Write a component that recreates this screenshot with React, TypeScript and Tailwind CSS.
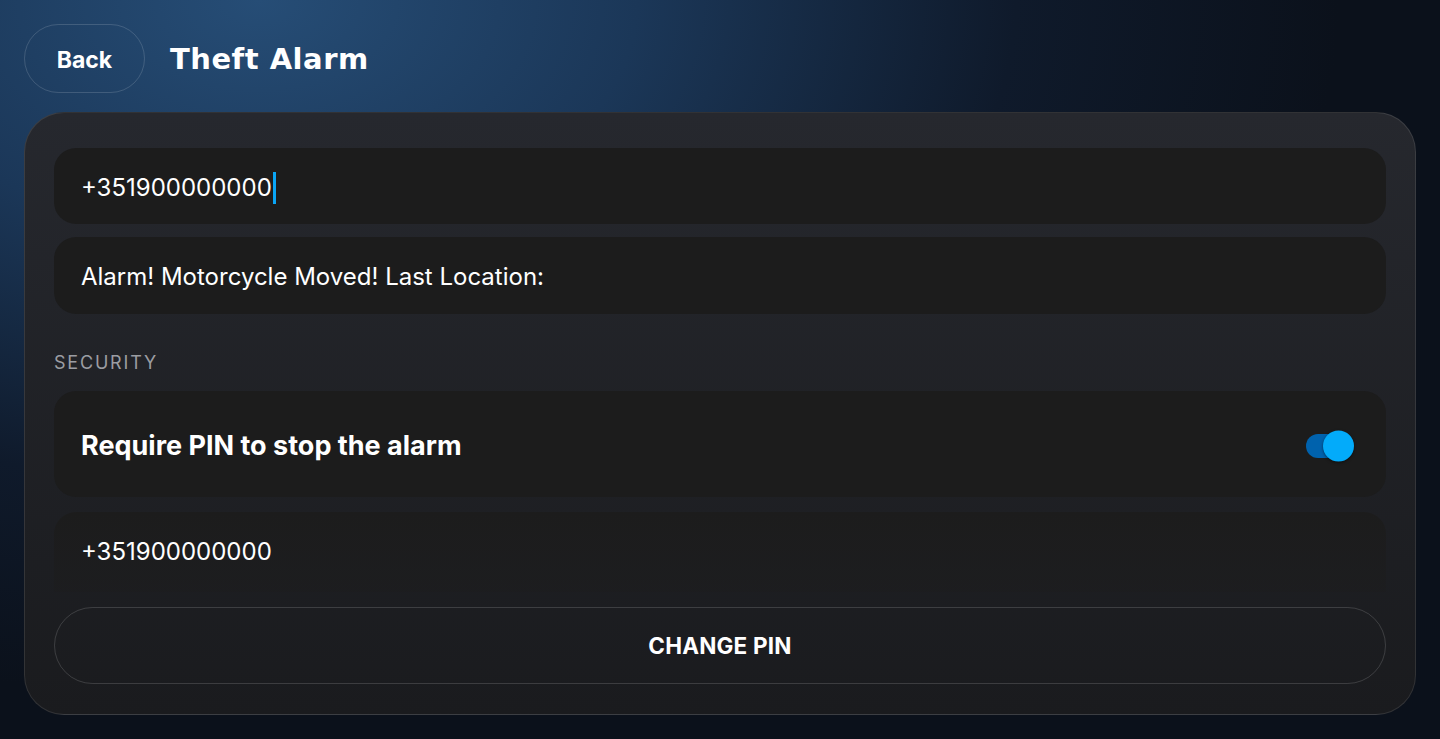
import React, { useState } from 'react';

const inter = { fontFamily: 'Inter, "Noto Sans", sans-serif' };

const App: React.FC = () => {
  const [requirePin, setRequirePin] = useState(true);

  return (
    <div
      className="min-h-screen w-full bg-[radial-gradient(ellipse_75%_95%_at_18%_0%,#264d76_0%,#1b3758_35%,#0f1a2b_70%,#0b111b_100%)] px-6 pt-6 pb-6 text-white"
      style={inter}
    >
      {/* header */}
      <div className="flex items-center gap-[25px]">
        <button className="h-[69px] w-[121px] rounded-full border border-white/15 pt-[3px] text-[23px] font-bold text-white">
          Back
        </button>
        <h1 className="pt-[2px] text-[29px] font-bold tracking-[0.5px] text-white" style={{ fontFamily: '"DejaVu Sans", sans-serif' }}>
          Theft Alarm
        </h1>
      </div>

      {/* card */}
      <div className="mt-[19px] flex flex-col rounded-[40px] border border-white/10 bg-gradient-to-b from-[#26282e] to-[#1a1b1e] px-[29px] pt-[35px] pb-[30px]">
        <div className="flex h-[76px] items-center rounded-[22px] bg-[#1c1c1c] px-[27px] pt-[3px] text-[24px]">
          <span>+351900000000</span>
          <span className="ml-[1px] h-[32px] w-[3px] bg-[#0aa5f5]" />
        </div>

        <div className="mt-[13px] flex h-[77px] items-center rounded-[22px] bg-[#1c1c1c] px-[27px] pt-[2px] text-[24px]">
          Alarm! Motorcycle Moved! Last Location:
        </div>

        <div className="mt-[35px] mb-[15px] text-[18px] tracking-[1.8px] text-[#9b9da2]">SECURITY</div>

        <div className="flex h-[106px] items-center justify-between rounded-[22px] bg-[#1c1c1c] px-[27px] pt-[4px]">
          <span className="text-[27px] font-bold">Require PIN to stop the alarm</span>
          <button
            onClick={() => setRequirePin(!requirePin)}
            className="relative mr-[13px] h-[24px] w-[40px] rounded-full bg-[#0062ad]"
          >
            <span className="absolute -right-[8px] top-1/2 h-[31px] w-[31px] -translate-y-1/2 rounded-full bg-[#03abfa] shadow-[0_1px_3px_rgba(0,0,0,0.5)]" />
          </button>
        </div>

        <div className="mt-[15px] flex h-[80px] items-center rounded-t-[22px] bg-gradient-to-b from-[#1c1c1c] to-[#1c1c1c]/40 px-[27px] text-[24px]">
          +351900000000
        </div>

        <button className="mt-[15px] h-[77px] w-full rounded-full border border-white/15 text-[22.5px] font-bold tracking-[0.2px]">
          CHANGE PIN
        </button>
      </div>
    </div>
  );
};

export default App;
